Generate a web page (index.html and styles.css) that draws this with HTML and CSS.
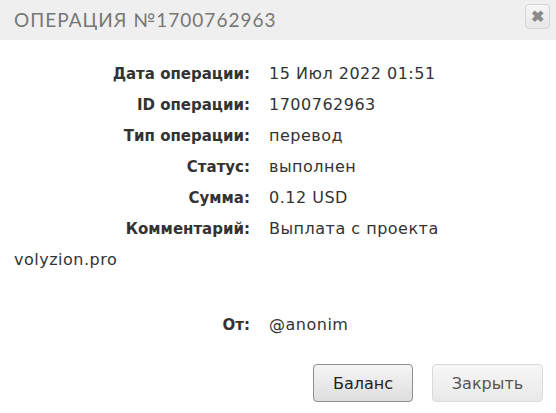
FILE: index.html
```html
<!DOCTYPE html>
<html lang="ru">
<head>
    <meta charset="UTF-8">
    <title>Операция №1700762963</title>
    <link rel="stylesheet" href="styles.css">
</head>
<body>
    <div class="dialog">
        <div class="dialog-header">
            <span class="dialog-title">Операция №1700762963</span>
            <button class="close-btn" title="Закрыть">&#10006;</button>
        </div>
        <div class="dialog-body">
            <div class="row"><span class="label">Дата операции:</span>15 Июл 2022 01:51</div>
            <div class="row"><span class="label">ID операции:</span>1700762963</div>
            <div class="row"><span class="label">Тип операции:</span>перевод</div>
            <div class="row"><span class="label">Статус:</span>выполнен</div>
            <div class="row"><span class="label">Сумма:</span>0.12 USD</div>
            <div class="row"><span class="label">Комментарий:</span>Выплата с проекта volyzion.pro</div>
            <div class="row spaced"><span class="label">От:</span>@anonim</div>
        </div>
        <div class="dialog-buttons">
            <button class="btn btn-main">Баланс</button>
            <button class="btn btn-light">Закрыть</button>
        </div>
    </div>
</body>
</html>
```

FILE: styles.css
```css
body {
    margin: 0;
    background-color: #fff;
    font-family: "DejaVu Sans", Arial, sans-serif;
    color: #333;
}
.dialog {
    width: 556px;
    height: 413px;
    display: flex;
    flex-direction: column;
}
.dialog-header {
    height: 40px;
    background-color: #efefef;
    display: flex;
    align-items: center;
    justify-content: space-between;
    padding: 0 6px 0 14px;
    box-sizing: border-box;
}
.dialog-title {
    font-family: "Lato", sans-serif;
    font-size: 19px;
    letter-spacing: 1px;
    text-transform: uppercase;
    color: #777;
    margin-top: -2px;
}
.close-btn {
    width: 25px;
    height: 25px;
    margin-top: -7px;
    padding: 0;
    border: 1px solid #d6d6d6;
    border-radius: 4px;
    background: linear-gradient(#f6f6f6, #e6e6e6);
    color: #8a8a8a;
    font-size: 16px;
    font-weight: bold;
    line-height: 23px;
    cursor: pointer;
}
.dialog-body {
    padding: 18px 14px 0;
    font-size: 16px;
    line-height: 31px;
    letter-spacing: 0.5px;
}
.label {
    display: inline-block;
    width: 236px;
    margin-right: 19px;
    text-align: right;
    font-weight: bold;
    font-size: 15px;
    line-height: 20px;
    letter-spacing: 0;
}
.spaced {
    margin-top: 34px;
}
.dialog-buttons {
    display: flex;
    justify-content: flex-end;
    gap: 19px;
    padding: 0 13px;
    margin-top: 24px;
}
.btn {
    height: 38px;
    border-radius: 4px;
    font-family: "DejaVu Sans", Arial, sans-serif;
    font-size: 16px;
    cursor: pointer;
}
.btn-main {
    width: 100px;
    border: 1px solid #8e8e8e;
    background: linear-gradient(#f5f5f5, #dedede);
    color: #222;
}
.btn-light {
    width: 111px;
    border: 1px solid #dadada;
    background: linear-gradient(#f7f7f7, #e9e9e9);
    color: #555;
}
```
